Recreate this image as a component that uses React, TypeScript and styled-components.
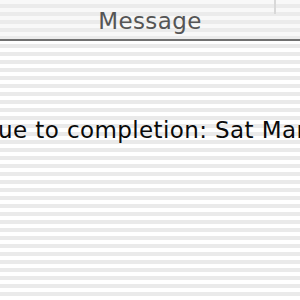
import React from 'react';
import styled, { createGlobalStyle } from 'styled-components';

const GlobalStyle = createGlobalStyle`
  html, body {
    margin: 0;
    padding: 0;
    width: 300px;
    height: 300px;
    overflow: hidden;
  }
`;

const Window = styled.div`
  width: 300px;
  height: 300px;
  display: flex;
  flex-direction: column;
  overflow: hidden;
  background: repeating-linear-gradient(
    to bottom,
    #ffffff 0px,
    #ffffff 4px,
    #eaeaea 4px,
    #eaeaea 8px
  );
  font-family: 'DejaVu Sans', 'Liberation Sans', sans-serif;
`;

const HeaderBar = styled.div`
  position: relative;
  height: 39px;
  flex-shrink: 0;
  display: flex;
  align-items: center;
  justify-content: center;
  border-bottom: 2px solid #707070;
  background: repeating-linear-gradient(
    to bottom,
    #f8f8f8 0px,
    #f8f8f8 4px,
    #ebebeb 4px,
    #ebebeb 8px
  );
`;

const HeaderTitle = styled.span`
  font-size: 23px;
  color: #555;
  letter-spacing: 0.4px;
  margin-top: 2px;
`;

const ColumnDivider = styled.div`
  position: absolute;
  top: 0;
  left: 274px;
  width: 2px;
  height: 14px;
  background: #d8d8d8;
`;

const Body = styled.div`
  flex: 1;
  display: flex;
  flex-direction: column;
  padding-top: 75px;
`;

const MessageRow = styled.div`
  white-space: nowrap;
  overflow: hidden;
  font-size: 23px;
  color: #0a0a0a;
  line-height: 28px;
  letter-spacing: 0.4px;
`;

const Clipped = styled.span`
  display: inline-block;
  margin-left: -79px;
`;

const App: React.FC = () => (
  <>
    <GlobalStyle />
    <Window>
      <HeaderBar>
        <HeaderTitle>Message</HeaderTitle>
        <ColumnDivider />
      </HeaderBar>
      <Body>
        <MessageRow>
          <Clipped>Continue to completion: Sat Mar 15</Clipped>
        </MessageRow>
      </Body>
    </Window>
  </>
);

export default App;
